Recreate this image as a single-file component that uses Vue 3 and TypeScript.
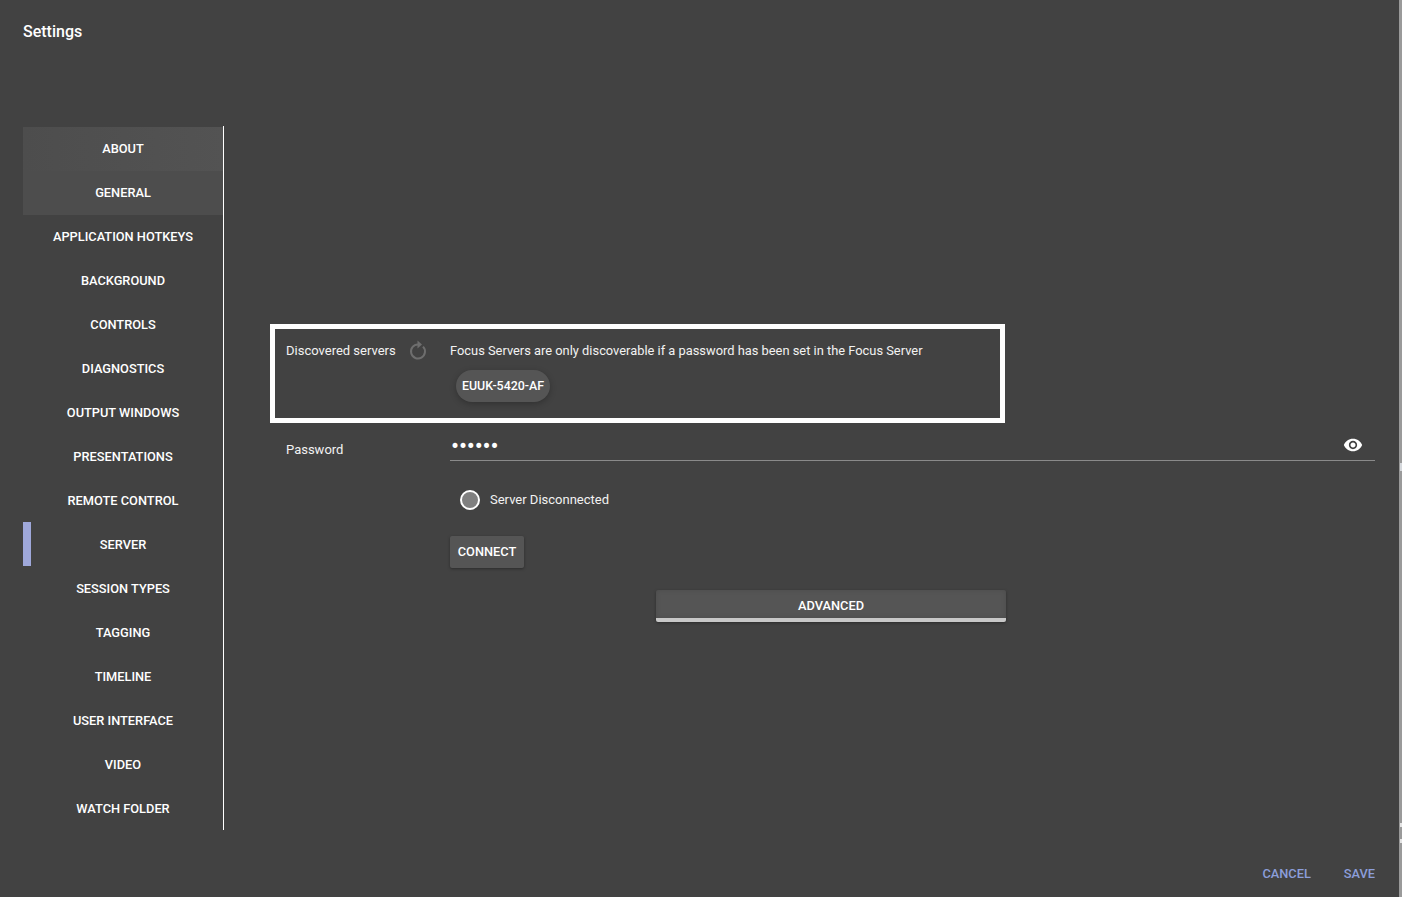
<script setup lang="ts">
const tabs: string[] = [
  'About', 'General', 'Application Hotkeys', 'Background', 'Controls', 'Diagnostics',
  'Output Windows', 'Presentations', 'Remote Control', 'Server', 'Session Types',
  'Tagging', 'Timeline', 'User Interface', 'Video', 'Watch Folder',
]
const active = 'Server'
</script>

<template>
  <div class="page">
    <div class="dialog">
      <h1 class="title">Settings</h1>
      <div class="main">
        <nav class="tabs">
          <button
            v-for="t in tabs"
            :key="t"
            class="tab"
            :class="{ about: t === 'About', general: t === 'General', active: t === active }"
          >{{ t }}</button>
        </nav>
        <section class="panel">
          <div class="highlight">
            <div class="label-col">
              <span class="label">Discovered servers</span>
              <svg class="refresh" viewBox="0 0 24 24" width="24" height="24">
                <path fill="none" stroke="currentColor" stroke-width="2" d="M12 6.5A7 7 0 1 0 17 8.6" />
                <path fill="currentColor" d="M11.5 2.5 16 6.5l-4.5 4z" />
              </svg>
            </div>
            <div class="servers">
              <p class="hint">Focus Servers are only discoverable if a password has been set in the Focus Server</p>
              <span class="chip">EUUK-5420-AF</span>
            </div>
          </div>
          <div class="password-row">
            <span class="label pw-label">Password</span>
            <div class="field">
              <span class="dots">••••••</span>
              <svg class="eye" viewBox="0 0 24 24" width="20" height="20">
                <path fill="#fff" d="M12 4.5C7 4.5 2.73 7.61 1 12c1.73 4.39 6 7.5 11 7.5s9.27-3.11 11-7.5c-1.73-4.39-6-7.5-11-7.5zM12 17c-2.76 0-5-2.24-5-5s2.24-5 5-5 5 2.24 5 5-2.24 5-5 5zm0-8c-1.66 0-3 1.34-3 3s1.34 3 3 3 3-1.34 3-3-1.34-3-3-3z" />
              </svg>
            </div>
          </div>
          <div class="status">
            <span class="radio"></span>
            <span class="status-text">Server Disconnected</span>
          </div>
          <button class="connect">Connect</button>
          <button class="advanced">Advanced</button>
        </section>
      </div>
      <footer class="actions">
        <button class="link">Cancel</button>
        <button class="link">Save</button>
      </footer>
    </div>
    <div class="edge">
      <i class="tick tick-a"></i>
      <i class="tick tick-b"></i>
      <i class="tick tick-c"></i>
    </div>
  </div>
</template>

<style scoped>
.page {
  display: flex;
  height: 897px;
  overflow: hidden;
  font-family: Roboto, "Liberation Sans", sans-serif;
  color: #fff;
  background: #424242;
}
.dialog {
  width: 1399px;
  height: 897px;
  display: flex;
  flex-direction: column;
  flex: none;
}
.edge {
  flex: 1;
  position: relative;
  background: #9a9a9a;
}
.tick {
  position: absolute;
  left: 1px;
  right: 0;
  height: 4px;
  background: #e4e4e4;
}
.tick-a { top: 463px; height: 8px; background: #d5d8dc; }
.tick-b { top: 823px; }
.tick-c { top: 839px; }
.title {
  margin: 0;
  height: 127px;
  box-sizing: border-box;
  padding: 21px 0 0 23px;
  font-size: 16px;
  line-height: 22px;
  font-weight: 500;
}
.main {
  display: flex;
  height: 704px;
  padding-left: 23px;
}
.tabs {
  position: relative;
  width: 201px;
  box-sizing: border-box;
  display: flex;
  flex-direction: column;
  flex: none;
}
.tabs::after {
  content: "";
  position: absolute;
  top: -1px;
  right: 0;
  width: 1px;
  height: 704px;
  background: #fff;
}
.tab {
  position: relative;
  height: 44px;
  flex: none;
  padding: 0 1px 0 0;
  border: 0;
  background: transparent;
  color: #fff;
  font: 500 12.8px/44px Roboto, sans-serif;
  text-transform: uppercase;
}
.tab.about {
  background: linear-gradient(90deg, #4d4d4d, #535353);
}
.tab.general {
  background: #4d4d4d;
}
.tab.active::before {
  content: "";
  position: absolute;
  left: 0;
  top: -1px;
  width: 8px;
  height: 44px;
  background: #9fa8da;
}
.panel {
  flex: 1;
  margin-left: 46px;
  padding: 197px 24px 0 0;
  display: flex;
  flex-direction: column;
  align-items: flex-start;
}
.highlight {
  width: 735px;
  height: 99px;
  box-sizing: border-box;
  border: 5px solid #fff;
  padding-left: 11px;
  display: flex;
  flex: none;
}
.label-col {
  width: 164px;
  flex: none;
  display: flex;
  align-items: flex-start;
}
.label {
  font-size: 13px;
  line-height: 20px;
  color: #f2f2f2;
  margin-top: 12px;
}
.refresh {
  margin: 9px 0 0 10px;
  color: #6e6e6e;
}
.servers {
  flex: 1;
}
.hint {
  margin: 12px 0 0;
  font-size: 12.87px;
  line-height: 20px;
  color: #f2f2f2;
}
.chip {
  display: inline-block;
  margin: 9px 0 0 6px;
  height: 32px;
  width: 94px;
  border-radius: 16px;
  background: #555;
  box-shadow: 0 2px 6px rgba(0, 0, 0, 0.25);
  font-size: 12.4px;
  font-weight: 500;
  line-height: 32px;
  text-align: center;
}
.password-row {
  width: 100%;
  height: 38px;
  display: flex;
  padding-left: 16px;
  box-sizing: border-box;
  flex: none;
}
.pw-label {
  width: 164px;
  flex: none;
  margin-top: 17px;
}
.field {
  flex: 1;
  height: 38px;
  box-sizing: border-box;
  border-bottom: 1px solid #8a8a8a;
  display: flex;
  justify-content: space-between;
  align-items: flex-start;
  padding: 12px 12px 0 0;
}
.dots {
  font-family: "DejaVu Sans", sans-serif;
  font-size: 17px;
  letter-spacing: -2.15px;
  line-height: 20px;
  margin-top: 1px;
}
.status {
  margin: 29px 0 0 190px;
  display: flex;
  align-items: center;
  height: 20px;
}
.radio {
  width: 20px;
  height: 20px;
  box-sizing: border-box;
  border: 2px solid #fff;
  border-radius: 50%;
  background: #808080;
}
.status-text {
  margin-left: 10px;
  font-size: 13px;
  line-height: 20px;
  color: #f2f2f2;
}
.connect {
  margin: 26px 0 0 180px;
  width: 74px;
  height: 32px;
  padding: 0;
  border: 0;
  border-radius: 2px;
  background: #555;
  box-shadow: 0 1px 3px rgba(0, 0, 0, 0.35);
  color: #fff;
  font: 500 12.8px/32px Roboto, sans-serif;
  text-transform: uppercase;
}
.advanced {
  margin: 22px 0 0 386px;
  width: 350px;
  height: 32px;
  box-sizing: border-box;
  padding: 3px 0 0;
  border: 0;
  border-bottom: 4px solid #c8c8c8;
  border-radius: 2px;
  background: #555;
  box-shadow: 0 1px 3px rgba(0, 0, 0, 0.35), inset 0 0 5px rgba(0, 0, 0, 0.12);
  color: #fff;
  font: 500 12.8px/25px Roboto, sans-serif;
  text-transform: uppercase;
}
.actions {
  flex: 1;
  display: flex;
  justify-content: flex-end;
  align-items: flex-start;
  gap: 33px;
  padding: 33px 24px 0 0;
}
.link {
  padding: 0;
  border: 0;
  background: transparent;
  color: #8c9eda;
  font: 500 12.8px/20px Roboto, sans-serif;
  text-transform: uppercase;
}
</style>

<style>
html, body {
  background: #424242;
  overflow: hidden;
}
</style>
